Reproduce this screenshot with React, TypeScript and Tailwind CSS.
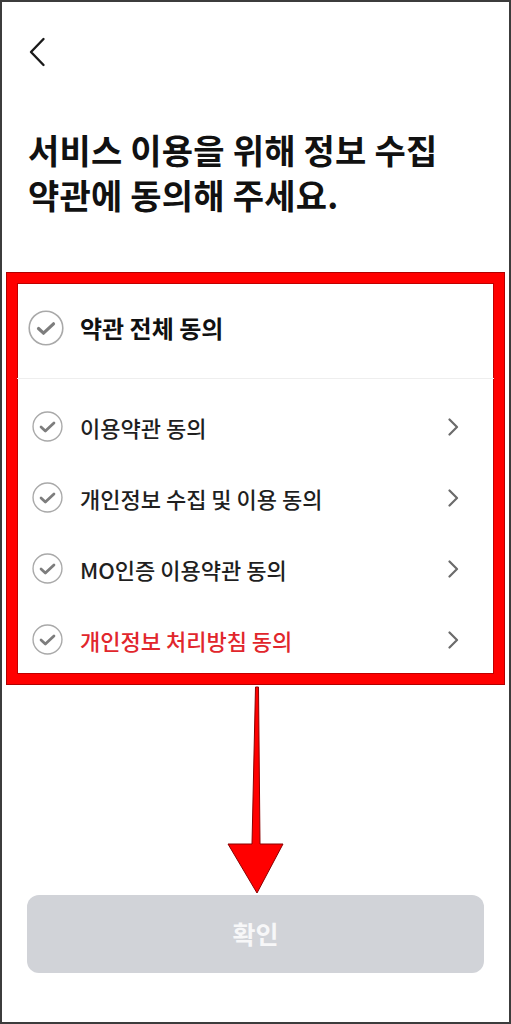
import React from "react";

const font = { fontFamily: '"Noto Sans CJK KR", "Noto Sans", sans-serif' };

function Check({ size }: { size: number }) {
  return (
    <svg width={size} height={size} viewBox="0 0 36 36" className="shrink-0">
      <circle cx="18" cy="18" r="16.8" fill="none" stroke="#a9a9a9" strokeWidth="1.6" />
      <path d="M10.5 18.5 L15.5 23.2 L25.5 13.8" fill="none" stroke="#7d7d7d" strokeWidth="3.2" strokeLinecap="round" strokeLinejoin="round" />
    </svg>
  );
}

function Chevron() {
  return (
    <svg width="12" height="18" viewBox="0 0 12 18" className="shrink-0">
      <path d="M2.5 1.5 L10 9 L2.5 16.5" fill="none" stroke="#6b6b6b" strokeWidth="2.2" strokeLinecap="round" strokeLinejoin="round" />
    </svg>
  );
}

function Row({ label, red }: { label: string; red?: boolean }) {
  return (
    <div className="flex h-[71px] items-center pl-[15px] pr-[35px]">
      <Check size={31} />
      <span className={`ml-[17px] flex-1 text-[22px] font-medium leading-none ${red ? "text-[#e1262c]" : "text-[#1f1f1f]"}`}>{label}</span>
      <Chevron />
    </div>
  );
}

export default function App() {
  return (
    <div style={font} className="relative flex h-[1024px] w-[511px] flex-col overflow-hidden border-2 border-[#3c3c3c] bg-white">
      <div className="pl-[26px] pt-[35px]">
        <svg width="18" height="30" viewBox="0 0 18 30">
          <path d="M15.5 2 L3 15 L15.5 28" fill="none" stroke="#1a1a1a" strokeWidth="2.4" strokeLinecap="round" strokeLinejoin="round" />
        </svg>
      </div>
      <h1 className="mt-[60px] pl-[26px] text-[34px] font-bold leading-[45px] tracking-[0.2px] text-[#111]">
        서비스 이용을 위해 정보 수집
        <br />
        약관에 동의해 주세요.
      </h1>
      <div className="ml-[5px] mt-[56px] h-[411px] w-[497px] shrink-0 border-[10px] border-[#ff0000] shadow-[0_0_0_1px_#b00000,inset_0_0_0_1px_#c00000]">
        <div className="flex h-[95px] items-center pb-[6px] pl-[11px]">
          <Check size={36} />
          <span className="ml-[16px] text-[24px] font-bold leading-none text-[#111]">약관 전체 동의</span>
        </div>
        <div className="h-px bg-[#eeeeee]" />
        <div className="pt-[12px]">
          <Row label="이용약관 동의" />
          <Row label="개인정보 수집 및 이용 동의" />
          <Row label="MO인증 이용약관 동의" />
          <Row label="개인정보 처리방침 동의" red />
        </div>
      </div>
      <div className="flex h-[211px] shrink-0 justify-center">
        <svg width="62" height="211" viewBox="0 0 62 211" className="ml-[3px]">
          <path d="M29.5 3 L32.5 3 L34 160 L57 160 L31 209 L2 160 L26 160 Z" fill="#ff0000" stroke="#8a0000" strokeWidth="1" strokeLinejoin="miter" />
        </svg>
      </div>
      <div className="mx-[25px] flex h-[78px] shrink-0 items-center justify-center rounded-[12px] bg-[#d1d3d8]">
        <span className="text-[25px] font-bold text-[#f7f7f8]">확인</span>
      </div>
    </div>
  );
}
